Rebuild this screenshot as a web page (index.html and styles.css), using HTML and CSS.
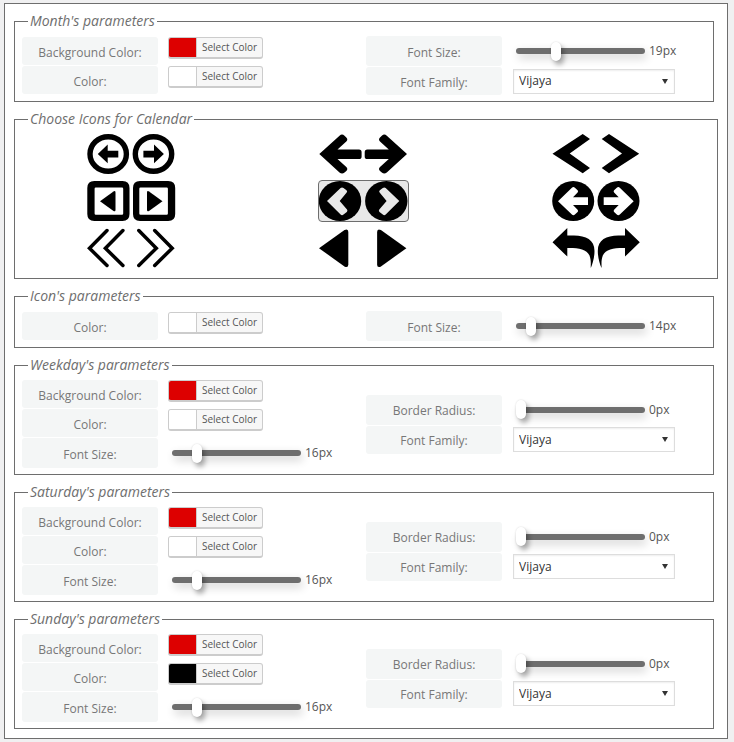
FILE: index.html
```html
<!DOCTYPE html>
<html lang="en">
<head>
<meta charset="utf-8">
<title>Calendar options</title>
<link rel="stylesheet" href="styles.css">
</head>
<body>
<form class="panel">
  <fieldset class="group">
    <legend>Month's parameters</legend>
    <div class="columns">
      <div class="column">
        <div class="row"><label class="name" for="month-bg">Background Color:</label><button class="picker" id="month-bg" type="button"><span class="swatch red"></span><span class="picker-text">Select Color</span></button></div>
        <div class="row"><label class="name" for="month-color">Color:</label><button class="picker" id="month-color" type="button"><span class="swatch"></span><span class="picker-text">Select Color</span></button></div>
      </div>
      <div class="column">
        <div class="row tall"><label class="name" for="month-size">Font Size:</label><input class="slider" id="month-size" type="range" min="12" max="36" value="19"><output for="month-size">19px</output></div>
        <div class="row"><label class="name" for="month-font">Font Family:</label><span class="select"><select id="month-font"><option>Vijaya</option></select></span></div>
      </div>
    </div>
  </fieldset>

  <fieldset class="group wide">
    <legend>Choose Icons for Calendar</legend>
    <div class="icons">
      <label class="icon"><input type="radio" name="icons" aria-label="Outlined circle arrows"><svg viewBox="0 0 89 40"><g id="i1"><ellipse cx="21.2" cy="20" rx="18.2" ry="17.3" fill="none" stroke="#000" stroke-width="5.4"/><path d="M10.8 20 20.7 10.600v6.200h10.600v6.600H20.7v5.800z"/></g><use href="#i1" transform="matrix(-1 0 0 1 87.7 0)"/></svg></label>
      <label class="icon"><input type="radio" name="icons" aria-label="Bold arrows"><svg viewBox="0 0 89 40"><path id="i2" d="M.3 20 20.500 1.700Q23-.5 25.500 1.700L27.300 3.400Q29.300 5.500 27.300 7.500L18.500 15.600H40Q42.600 15.600 42.600 18.200V22.400Q42.600 25 40 25H18.500L27.300 33Q29.300 35 27.300 37L25.500 38.600Q23 40.500 20.500 38.500Z"/><use href="#i2" transform="matrix(-1 0 0 1 88.3 0)"/></svg></label>
      <label class="icon"><input type="radio" name="icons" aria-label="Sharp chevrons"><svg viewBox="0 0 89 40"><path id="i3" d="M.5 19.800 30.700 0 38 5 17.700 19.600 38 34 30.700 39.200z"/><use href="#i3" transform="matrix(-1 0 0 1 87.7 0)"/></svg></label>

      <label class="icon"><input type="radio" name="icons" aria-label="Squared triangles"><svg viewBox="0 0 89 40"><g id="i4"><path fill-rule="evenodd" d="M7.300 0H35.500Q42.500 0 42.500 7V33Q42.500 40 35.500 40H7.300Q.3 40 .3 33V7Q.3 0 7.300 0ZM8.800 6.500Q7.600 6.500 7.600 7.700V32.500Q7.600 33.700 8.800 33.700H35Q36.200 33.700 36.200 32.500V7.700Q36.200 6.500 35 6.500Z"/><path d="M13 20.200 26.500 10.400Q28.500 9.500 28.500 11.500V29Q28.500 31 26.500 30Z"/></g><use href="#i4" transform="matrix(-1 0 0 1 88.5 0)"/></svg></label>
      <label class="icon"><input type="radio" name="icons" aria-label="Filled circle chevrons" checked><svg viewBox="0 0 89 40"><g id="i5"><ellipse cx="21" cy="20" rx="21.200" ry="20"/><path class="cut" d="M8 20 21.600 7Q23 5.800 24.500 7L27.500 9.300Q28.800 10.500 27.500 11.800L20.700 20 28 28.500Q29 29.800 27.800 31L24.500 33.600Q23 34.800 21.600 33.600Z"/></g><use href="#i5" transform="matrix(-1 0 0 1 88.3 0)"/></svg></label>
      <label class="icon"><input type="radio" name="icons" aria-label="Filled circle arrows"><svg viewBox="0 0 89 40"><g id="i6"><ellipse cx="21.200" cy="20" rx="21" ry="20"/><path class="cut" d="M6 20.200 19.900 6.700Q21.400 5.300 22.900 6.700L25.600 9.200Q26.600 10.300 25.600 11.400L21 16.300H36V24H21L25.600 28.700Q26.600 29.900 25.600 31L22.900 33.600Q21.400 35 19.900 33.600Z"/></g><use href="#i6" transform="matrix(-1 0 0 1 87.7 0)"/></svg></label>

      <label class="icon"><input type="radio" name="icons" aria-label="Double chevrons"><svg viewBox="0 0 89 40"><path id="i7" d="M20 2.500 2.500 20.200 20 37.500M35.900 2.500 18.400 20.200 35.900 37.500" fill="none" stroke="#000" stroke-width="3.500" stroke-linecap="round"/><use href="#i7" transform="matrix(-1 0 0 1 87.7 0)"/></svg></label>
      <label class="icon"><input type="radio" name="icons" aria-label="Triangles"><svg viewBox="0 0 89 40"><path id="i8" d="M0 20.200 25.500 2Q29.300.2 29.300 4V36.500Q29.300 40 25.800 38.700Z"/><use href="#i8" transform="matrix(-1 0 0 1 87.4 0)"/></svg></label>
      <label class="icon"><input type="radio" name="icons" aria-label="Curved arrows"><svg viewBox="0 0 89 40"><path id="i9" d="M.5 14.200 15.300 0V7.600H22C34 7.700 42.500 12 42.500 23 42.500 30 40.500 36 38.800 40 38.500 37 39.500 33 37.500 27.500 34.500 21 26 19.800 15.300 20V28.600Z"/><use href="#i9" transform="matrix(-1 0 0 1 88.3 0)"/></svg></label>
    </div>
  </fieldset>

  <fieldset class="group">
    <legend>Icon's parameters</legend>
    <div class="columns">
      <div class="column">
        <div class="row"><label class="name" for="icon-color">Color:</label><button class="picker" id="icon-color" type="button"><span class="swatch"></span><span class="picker-text">Select Color</span></button></div>
      </div>
      <div class="column">
        <div class="row tall"><label class="name" for="icon-size">Font Size:</label><input class="slider" id="icon-size" type="range" min="12" max="36" value="14"><output for="icon-size">14px</output></div>
      </div>
    </div>
  </fieldset>

  <fieldset class="group">
    <legend>Weekday's parameters</legend>
    <div class="columns">
      <div class="column">
        <div class="row"><label class="name" for="week-bg">Background Color:</label><button class="picker" id="week-bg" type="button"><span class="swatch red"></span><span class="picker-text">Select Color</span></button></div>
        <div class="row"><label class="name" for="week-color">Color:</label><button class="picker" id="week-color" type="button"><span class="swatch"></span><span class="picker-text">Select Color</span></button></div>
        <div class="row tall"><label class="name" for="week-size">Font Size:</label><input class="slider" id="week-size" type="range" min="12" max="36" value="16"><output for="week-size">16px</output></div>
      </div>
      <div class="column">
        <div class="row tall"><label class="name" for="week-radius">Border Radius:</label><input class="slider" id="week-radius" type="range" min="0" max="50" value="0"><output for="week-radius">0px</output></div>
        <div class="row"><label class="name" for="week-font">Font Family:</label><span class="select"><select id="week-font"><option>Vijaya</option></select></span></div>
      </div>
    </div>
  </fieldset>

  <fieldset class="group">
    <legend>Saturday's parameters</legend>
    <div class="columns">
      <div class="column">
        <div class="row"><label class="name" for="sat-bg">Background Color:</label><button class="picker" id="sat-bg" type="button"><span class="swatch red"></span><span class="picker-text">Select Color</span></button></div>
        <div class="row"><label class="name" for="sat-color">Color:</label><button class="picker" id="sat-color" type="button"><span class="swatch"></span><span class="picker-text">Select Color</span></button></div>
        <div class="row tall"><label class="name" for="sat-size">Font Size:</label><input class="slider" id="sat-size" type="range" min="12" max="36" value="16"><output for="sat-size">16px</output></div>
      </div>
      <div class="column">
        <div class="row tall"><label class="name" for="sat-radius">Border Radius:</label><input class="slider" id="sat-radius" type="range" min="0" max="50" value="0"><output for="sat-radius">0px</output></div>
        <div class="row"><label class="name" for="sat-font">Font Family:</label><span class="select"><select id="sat-font"><option>Vijaya</option></select></span></div>
      </div>
    </div>
  </fieldset>

  <fieldset class="group">
    <legend>Sunday's parameters</legend>
    <div class="columns">
      <div class="column">
        <div class="row"><label class="name" for="sun-bg">Background Color:</label><button class="picker" id="sun-bg" type="button"><span class="swatch red"></span><span class="picker-text">Select Color</span></button></div>
        <div class="row"><label class="name" for="sun-color">Color:</label><button class="picker" id="sun-color" type="button"><span class="swatch black"></span><span class="picker-text">Select Color</span></button></div>
        <div class="row tall"><label class="name" for="sun-size">Font Size:</label><input class="slider" id="sun-size" type="range" min="12" max="36" value="16"><output for="sun-size">16px</output></div>
      </div>
      <div class="column">
        <div class="row tall"><label class="name" for="sun-radius">Border Radius:</label><input class="slider" id="sun-radius" type="range" min="0" max="50" value="0"><output for="sun-radius">0px</output></div>
        <div class="row"><label class="name" for="sun-font">Font Family:</label><span class="select"><select id="sun-font"><option>Vijaya</option></select></span></div>
      </div>
    </div>
  </fieldset>
</form>
</body>
</html>
```
FILE: styles.css
```css
* {
  box-sizing: border-box;
}

body {
  margin: 0;
  padding: 3px 6px 3px 4px;
  background: #f0f0f1;
  color: #555;
  font: 12px/16px "Open Sans", sans-serif;
}

.panel {
  display: flex;
  flex-direction: column;
  gap: 9px;
  padding: 9px;
  border: 1px solid #6e6e6e;
  background: #fff;
}

.group {
  min-width: 0;
  margin: 0 4px 0 0;
  padding: 6px 7px;
  border: 1px solid #6e6e6e;
}

.group.wide {
  margin-right: 0;
  padding: 5px 4px 9px 0;
}

legend {
  margin-left: 6px;
  padding: 0 2px;
  color: #6e6e6e;
  font-size: 14px;
  font-style: italic;
  line-height: 16px;
  padding-bottom: 1px;
}

.wide legend {
  margin-left: 13px;
}

.columns {
  display: grid;
  grid-template-columns: 1fr 1fr;
  align-items: center;
  gap: 4px;
}

.column {
  display: grid;
  gap: 1px;
}

.row {
  display: flex;
  align-items: center;
  height: 28px;
}

.row.tall {
  height: 30px;
}

.name {
  flex: none;
  display: flex;
  align-items: center;
  justify-content: center;
  width: 136px;
  height: 100%;
  margin-right: 10px;
  padding-top: 3px;
  border-radius: 3px;
  background: #f4f6f6;
  color: #777;
}

.picker {
  display: flex;
  align-self: flex-start;
  height: 22px;
  padding: 0;
  overflow: hidden;
  border: 1px solid #ccc;
  border-bottom-width: 2px;
  border-radius: 3px;
  background: #f7f7f7;
  color: #555;
  font: 10px/19px "Open Sans", sans-serif;
}

.swatch {
  width: 27px;
  height: 100%;
  background: #fff;
}

.swatch.red {
  background: #d00;
}

.swatch.black {
  background: #000;
}

.picker-text {
  padding: 0 5px;
  border-left: 1px solid #ccc;
}

.slider {
  appearance: none;
  width: 129px;
  height: 6px;
  margin: 0 4px;
  border-radius: 3px;
  background: #6e6e6e;
  box-shadow: 2px 4px 10px rgba(0, 0, 0, 0.2);
}

.slider::-webkit-slider-thumb {
  appearance: none;
  width: 10px;
  height: 19px;
  border-radius: 5px;
  background: #fff;
  box-shadow: 3px 4px 5px rgba(0, 0, 0, 0.3), 0 0 2px rgba(0, 0, 0, 0.15);
}

.select {
  position: relative;
  margin-left: 1px;
}

.select::after {
  content: "";
  position: absolute;
  top: 10px;
  right: 7px;
  border: 3px solid transparent;
  border-top: 5px solid #333;
  border-bottom: 0;
  pointer-events: none;
}

.select select {
  display: block;
  appearance: none;
  width: 162px;
  height: 25px;
  padding: 0 5px;
  border: 1px solid #ddd;
  border-radius: 0;
  background: #fff;
  box-shadow: inset 0 1px 2px rgba(0, 0, 0, 0.07);
  color: #333;
  font: 12px/16px "Open Sans", sans-serif;
}

.icons {
  display: grid;
  grid-template-columns: repeat(3, 1fr);
  justify-items: center;
  gap: 5px 0;
}

.icon {
  --tile: #fff;
  position: relative;
  width: 91px;
  height: 42px;
  border: 1px solid transparent;
  border-radius: 4px;
  background: var(--tile);
}

.icon:has(:checked) {
  --tile: #e8e8e8;
  border-color: #6e6e6e;
}

.icon input {
  position: absolute;
  margin: 0;
  opacity: 0;
}

.icon svg {
  display: block;
  width: 89px;
  height: 40px;
}

.cut {
  fill: var(--tile);
}
```
